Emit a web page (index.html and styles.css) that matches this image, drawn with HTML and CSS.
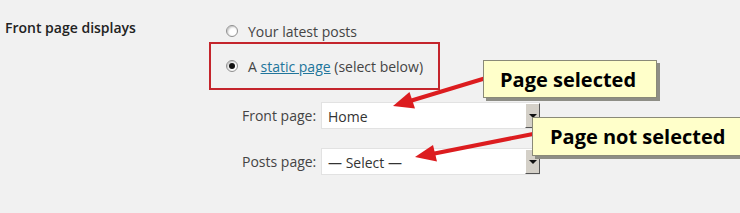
FILE: index.html
```html
<!DOCTYPE html>
<html lang="en">

<head>
    <meta charset="UTF-8">
    <meta name="viewport" content="width=device-width, initial-scale=1.0">
    <title>Reading Settings</title>
    <link rel="stylesheet" href="styles.css">
</head>

<body>

    <div class="settings">
        <div class="setting-row">
            <div class="setting-label">Front page displays</div>
            <div class="setting-field">
                <div class="option">
                    <span class="radio"></span>
                    <span>Your latest posts</span>
                </div>
                <div class="option option-marked">
                    <span class="radio checked"></span>
                    <span>A <a href="#" class="link">static page</a> (select below)</span>
                </div>
                <div class="page-select">
                    <span class="select-label">Front page:</span>
                    <div class="select">
                        <span class="select-value">Home</span>
                        <span class="select-button"></span>
                    </div>
                </div>
                <div class="page-select">
                    <span class="select-label">Posts page:</span>
                    <div class="select">
                        <span class="select-value">&mdash; Select &mdash;</span>
                        <span class="select-button"></span>
                    </div>
                </div>
            </div>
        </div>

        <svg class="arrows" width="740" height="213" viewBox="0 0 740 213">
            <line x1="486" y1="78" x2="410" y2="101" stroke="#dc1c1f" stroke-width="4" />
            <polygon points="393,106 415,108.5 409.5,92" fill="#dc1c1f" />
            <line x1="533" y1="134" x2="432" y2="154" stroke="#dc1c1f" stroke-width="4" />
            <polygon points="415,157 437,161.5 433,145" fill="#dc1c1f" />
        </svg>

        <div class="callout callout-one">Page selected</div>
        <div class="callout callout-two">Page not selected</div>
    </div>

</body>

</html>
```

FILE: styles.css
```css
body {
    font-family: "Open Sans", Arial, sans-serif;
    background-color: #f1f1f1;
    color: #444;
    margin: 0;
    padding: 0;
}

.settings {
    position: relative;
    width: 740px;
    height: 213px;
    overflow: hidden;
}

.setting-row {
    display: flex;
    padding-top: 20px;
}

.setting-label {
    width: 204px;
    padding-left: 5px;
    font-size: 14px;
    font-weight: 600;
    color: #222;
    line-height: 16px;
}

.setting-field {
    display: flex;
    flex-direction: column;
}

.option {
    display: flex;
    align-items: center;
    height: 22px;
    padding-left: 17px;
    font-size: 14px;
}

.option-marked {
    width: 210px;
    height: 44px;
    border: 2px solid #c4252c;
}

.option-marked .radio {
    margin-left: -2px;
}

.radio {
    width: 10px;
    height: 10px;
    border: 1px solid #8f8f8f;
    border-radius: 50%;
    background-color: #fff;
    box-shadow: inset 1px 1px 2px rgba(0, 0, 0, 0.25);
    margin-right: 10px;
    position: relative;
}

.radio.checked::after {
    content: "";
    position: absolute;
    left: 2px;
    top: 2px;
    width: 6px;
    height: 6px;
    border-radius: 50%;
    background-color: #111;
}

.link {
    color: #21759b;
    text-decoration: underline;
}

.page-select {
    display: flex;
    align-items: center;
    margin-top: 12px;
    padding-left: 33px;
    font-size: 14px;
}

.page-select + .page-select {
    margin-top: 19px;
}

.select-label {
    width: 79px;
}

.select {
    display: flex;
    justify-content: space-between;
    width: 219px;
    height: 27px;
    background-color: #fff;
    border: 1px solid #e2e2e2;
    border-right: none;
    box-sizing: border-box;
}

.select-value {
    padding-left: 6px;
    line-height: 27px;
    color: #333;
}

.select-button {
    position: relative;
    width: 15px;
    background-color: #d4d0c8;
    border-left: 1px solid #fff;
    border-top: 1px solid #fff;
    border-right: 1px solid #555;
    border-bottom: 1px solid #555;
    box-sizing: border-box;
}

.select-button::after {
    content: "";
    position: absolute;
    left: 3px;
    top: 10px;
    border-left: 4px solid transparent;
    border-right: 4px solid transparent;
    border-top: 4px solid #111;
}

.arrows {
    position: absolute;
    left: 0;
    top: 0;
}

.callout {
    position: absolute;
    background-color: #ffffca;
    border: 1px solid #8a8a78;
    box-shadow: 3px 3px 0 #8e8e86;
    color: #000;
    font-size: 20px;
    font-weight: 700;
    box-sizing: border-box;
    display: flex;
    align-items: center;
}

.callout-one {
    left: 483px;
    top: 60px;
    width: 174px;
    height: 38px;
    padding-left: 16px;
}

.callout-two {
    left: 532px;
    top: 117px;
    width: 212px;
    height: 39px;
    padding-left: 17px;
}
```
